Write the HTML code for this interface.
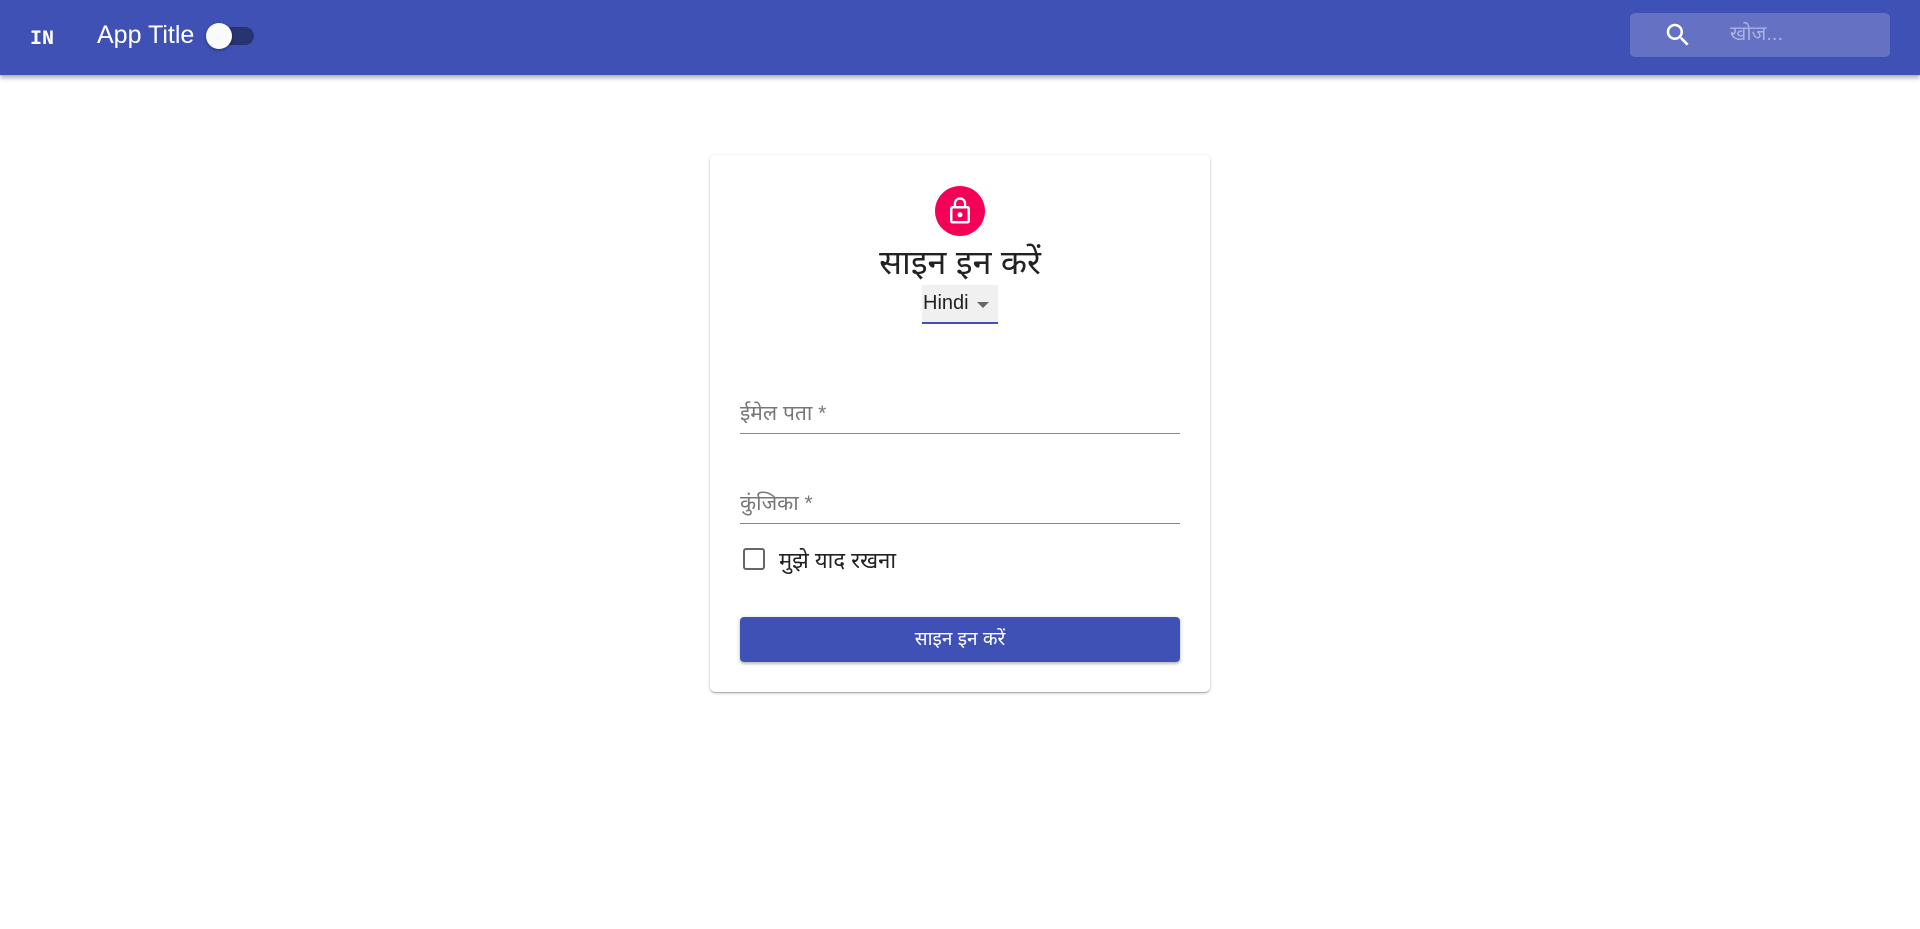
<!DOCTYPE html>
<html><head><meta charset="utf-8"><style>
*{box-sizing:border-box;margin:0;padding:0}
body{width:1920px;height:929px;background:#fff;font-family:"Liberation Sans","Noto Sans Devanagari","Lohit Devanagari","FreeSans",sans-serif;position:relative;overflow:hidden}
.bar{position:absolute;left:0;top:0;width:1920px;height:75px;background:#3f51b5;box-shadow:0 2px 4px rgba(0,0,0,.25),0 4px 5px rgba(0,0,0,.12)}
.in{position:absolute;left:30px;top:28px;color:#fff;font:bold 20px "Liberation Mono",monospace}
.title{position:absolute;left:97px;top:21px;color:#fff;font-size:25px}
.track{position:absolute;left:210px;top:27px;width:44px;height:18px;border-radius:9px;background:#283372}
.thumb{position:absolute;left:206px;top:23px;width:26px;height:26px;border-radius:50%;background:#fafafa;box-shadow:0 1px 3px rgba(0,0,0,.4)}
.search{position:absolute;left:1630px;top:13px;width:260px;height:44px;border-radius:5px;background:#6572c4}
.search svg{position:absolute;left:33px;top:7px}
.search span{position:absolute;left:100px;top:10px;color:#aab2e0;font-size:20px}
.card{position:absolute;left:710px;top:155px;width:500px;height:537px;background:#fff;border-radius:5px;box-shadow:0 1px 3px rgba(0,0,0,.2),0 1px 1px rgba(0,0,0,.14),0 2px 1px -1px rgba(0,0,0,.12)}
.av{position:absolute;left:225px;top:31px;width:50px;height:50px;border-radius:50%;background:#f50057}
.av svg{position:absolute;left:10px;top:10px}
.h{position:absolute;left:0;width:500px;top:89px;text-align:center;font-size:34px;color:#222}
.sel{position:absolute;left:212px;top:130px;width:76px;height:39px;background:#f0f0f0;border-bottom:2px solid #3f51b5}
.sel span{position:absolute;left:1px;top:7px;font-size:20px;color:#222}
.sel i{position:absolute;left:55px;top:17px;border:6px solid transparent;border-top:6px solid #666}
.lab{position:absolute;left:30px;font-size:21px;color:#777}
.ul{position:absolute;left:30px;width:440px;height:1px;background:#888}
.cb{position:absolute;left:33px;top:393px;width:22px;height:22px;border:2px solid #666;border-radius:3px}
.cbt{position:absolute;left:69px;top:393px;font-size:22px;color:#222}
.btn{position:absolute;left:30px;top:462px;width:440px;height:45px;background:#3f51b5;border-radius:4px;color:#fff;text-align:center;line-height:45px;font-size:19px;box-shadow:0 1px 5px rgba(0,0,0,.2),0 2px 2px rgba(0,0,0,.14)}
</style></head><body>
<div class="bar">
<div class="in">IN</div>
<div class="title">App Title</div>
<div class="track"></div><div class="thumb"></div>
<div class="search"><svg width="30" height="30" viewBox="0 0 24 24"><path fill="#fff" d="M15.5 14h-.79l-.28-.27A6.47 6.47 0 0 0 16 9.5 6.5 6.5 0 1 0 9.5 16c1.61 0 3.09-.59 4.23-1.57l.27.28v.79l5 4.99L20.490 19l-4.99-5zm-6 0C7.01 14 5 11.99 5 9.5S7.01 5 9.5 5 14 7.01 14 9.5 11.990 14 9.5 14z"/></svg><span>खोज...</span></div>
</div>
<div class="card">
<div class="av"><svg width="30" height="30" viewBox="0 0 24 24"><path fill="#fff" d="M12 17c1.1 0 2-.9 2-2s-.9-2-2-2-2 .9-2 2 .9 2 2 2zm6-9h-1V6c0-2.76-2.24-5-5-5S7 3.24 7 6v2H6c-1.1 0-2 .9-2 2v10c0 1.1.9 2 2 2h12c1.1 0 2-.9 2-2V10c0-1.1-.9-2-2-2zM8.9 6c0-1.71 1.39-3.1 3.1-3.1s3.1 1.39 3.1 3.1v2H8.9V6zM18 20H6V10h12v10z"/></svg></div>
<div class="h">साइन इन करें</div>
<div class="sel"><span>Hindi</span><i></i></div>
<div class="lab" style="top:246px">ईमेल पता *</div>
<div class="ul" style="top:278px"></div>
<div class="lab" style="top:336px">कुंजिका *</div>
<div class="ul" style="top:368px"></div>
<div class="cb"></div>
<div class="cbt">मुझे याद रखना</div>
<div class="btn">साइन इन करें</div>
</div>
</body></html>
